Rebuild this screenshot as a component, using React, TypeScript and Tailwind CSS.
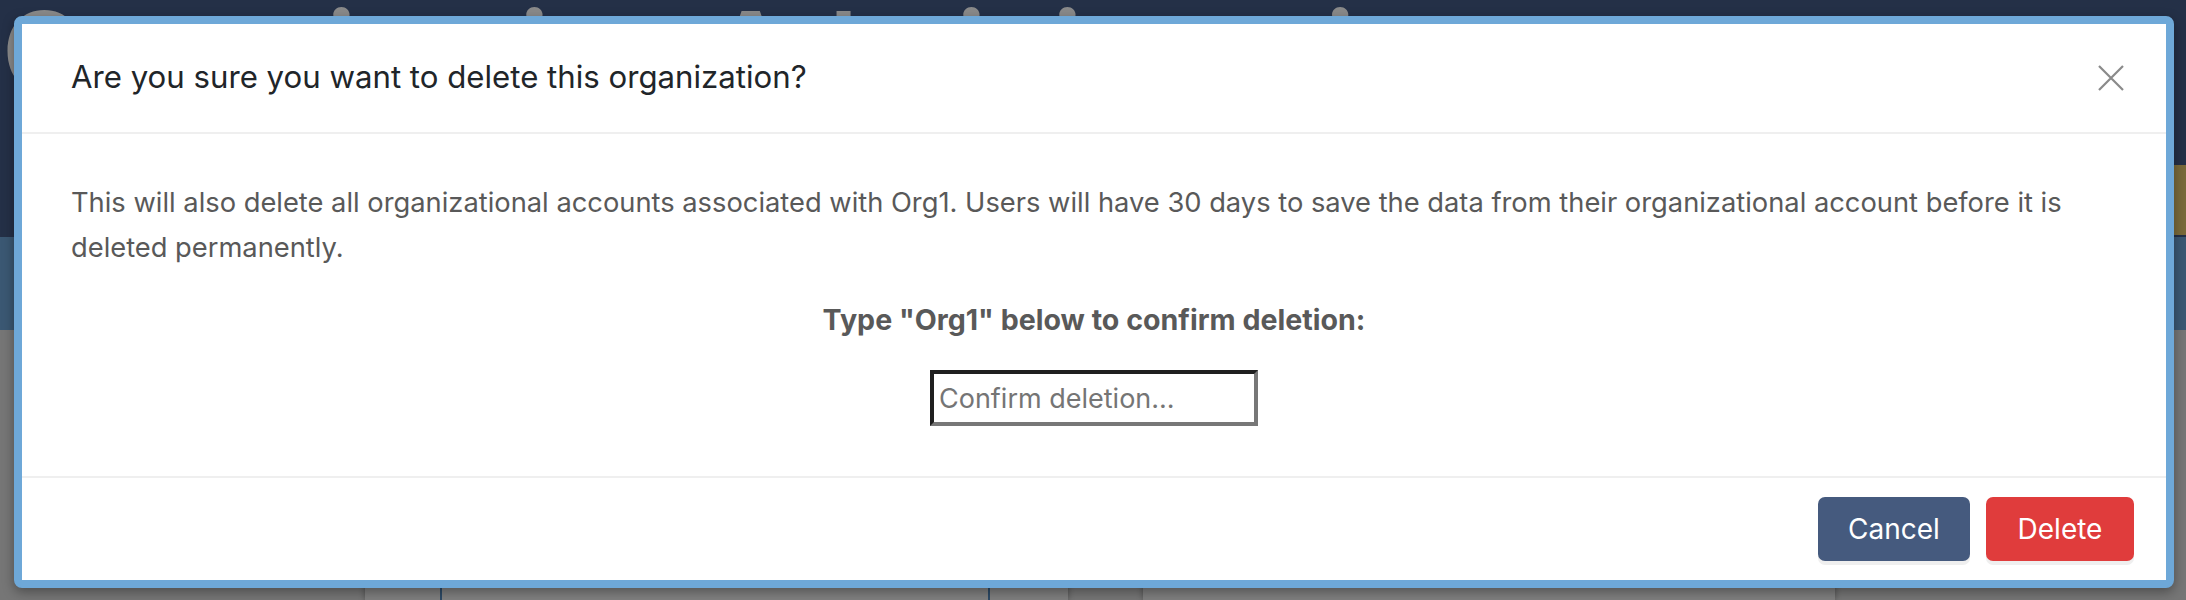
import React from "react";

export default function App() {
  return (
    <div className="relative w-[2186px] h-[600px] overflow-hidden bg-[#767676] font-['Inter',sans-serif]">
      {/* dimmed background page */}
      <div className="flex flex-col w-full h-full">
        <div className="relative h-[237px] shrink-0 bg-[#243047] flex items-start overflow-hidden">
          <div className="pl-[2px] text-[110px] leading-none font-semibold text-[#8a8a8a] whitespace-nowrap -mt-[4px]">
            Organization Administration
          </div>
        </div>
        <div className="h-[93px] shrink-0 bg-[#3b5873]"></div>
        <div className="flex-1 flex items-end pl-[365px] gap-[75px]">
          <div className="w-[703px] h-[40px] bg-[#7f7f7f] shadow-[0_0_6px_rgba(0,0,0,0.35)] flex items-end pl-[75px]">
            <div className="w-[550px] h-[20px] rounded-t-[8px] border-x-2 border-t-2 border-[#2d4a66] bg-[#808080]"></div>
          </div>
          <div className="w-[692px] h-[40px] bg-[#7f7f7f] shadow-[0_0_6px_rgba(0,0,0,0.35)]"></div>
        </div>
      </div>
      <div className="absolute right-0 top-[165px] w-[14px] h-[70px] bg-[#7a6a3a]"></div>

      {/* modal */}
      <div className="absolute left-[14px] top-[16px] w-[2160px] h-[572px] rounded-[8px] border-[8px] border-[#6ea8d8] bg-white shadow-[0_4px_12px_rgba(0,0,0,0.35)] flex flex-col">
        <div className="h-[110px] shrink-0 flex items-center justify-between pl-[49px] pr-[42px] border-b-2 border-[#efefef]">
          <h2 className="text-[31.2px] leading-none text-[#212529] font-normal">
            Are you sure you want to delete this organization?
          </h2>
          <svg width="26" height="26" viewBox="0 0 26 26" className="shrink-0">
            <path d="M1 1 L25 25 M25 1 L1 25" stroke="#8a8a8a" strokeWidth="2.2" fill="none" />
          </svg>
        </div>
        <div className="flex-1 flex flex-col items-center px-[49px] pt-[46px]">
          <p className="self-stretch text-[27.3px] leading-[45px] text-[#595959]">
            This will also delete all organizational accounts associated with Org1. Users will have 30 days to save the data from their organizational account before it is deleted permanently.
          </p>
          <p className="mt-[27px] text-[28.6px] leading-[45px] font-bold text-[#595959]">
            Type "Org1" below to confirm deletion:
          </p>
          <input
            placeholder="Confirm deletion..."
            className="mt-[28px] w-[328px] h-[56px] px-[5px] text-[27px] text-[#333] placeholder:text-[#757575] border-4 border-t-[#1f1f1f] border-l-[#1f1f1f] border-r-[#777777] border-b-[#777777] outline-none"
          />
        </div>
        <div className="h-[104px] shrink-0 border-t-2 border-[#efefef] flex items-center justify-end gap-[16px] pr-[32px]">
          <button className="w-[152px] h-[64px] rounded-[7px] bg-[#455a7e] text-white text-[28px] shadow-[0_4px_0_#efefef]">
            Cancel
          </button>
          <button className="w-[148px] h-[64px] rounded-[7px] bg-[#e03c3c] text-white text-[28px] shadow-[0_4px_0_#efefef]">
            Delete
          </button>
        </div>
      </div>
    </div>
  );
}
